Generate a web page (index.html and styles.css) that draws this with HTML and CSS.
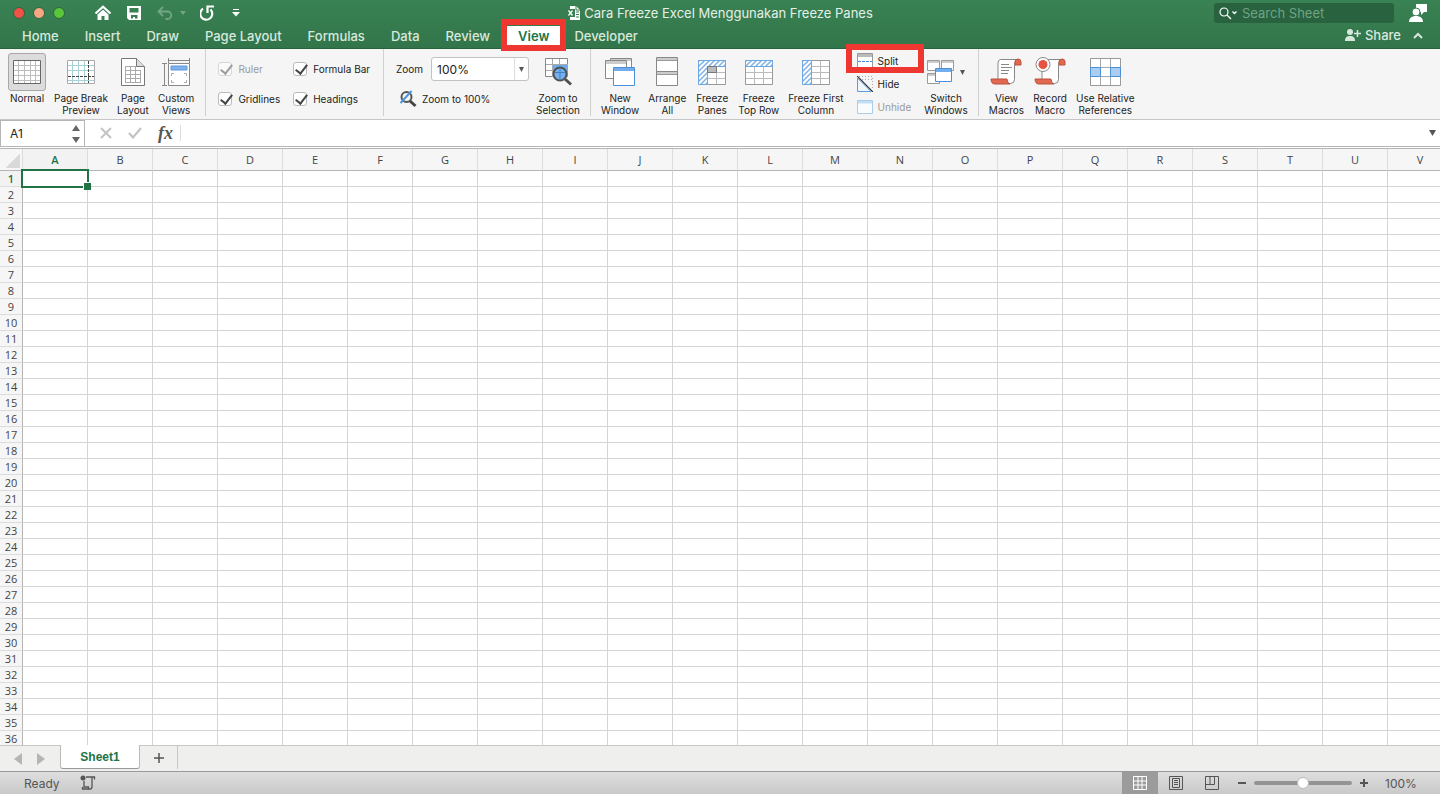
FILE: index.html
```html
<!DOCTYPE html>
<html lang="en">

<head>
    <meta charset="UTF-8">
    <meta name="viewport" content="width=device-width, initial-scale=1.0">
    <title>Cara Freeze Excel Menggunakan Freeze Panes</title>
    <link rel="stylesheet" href="styles.css">
</head>

<body>
    <header class="app-header">
        <div class="title-bar">
            <div class="title-left">
                <div class="window-buttons">
                    <button class="window-button close" aria-label="Close"></button>
                    <button class="window-button minimize" aria-label="Minimize"></button>
                    <button class="window-button maximize" aria-label="Maximize"></button>
                </div>
                <div class="quick-access">
                    <button class="quick-button" aria-label="Home">
                        <svg width="18" height="16" viewBox="0 0 18 16"><path d="M1.500 8.500L9 1.800l7.500 6.700" fill="none" stroke="#fff" stroke-width="2.200"/><path d="M3.500 9.500L9 4.800l5.500 4.700V15H10.500v-4h-3v4h-4z" fill="#fff"/></svg>
                    </button>
                    <button class="quick-button" aria-label="Save">
                        <svg width="16" height="16" viewBox="0 0 16 16"><path fill="#fff" fill-rule="evenodd" d="M1 1h14v14H3l-2-2zM3.500 3v4.500h9V3zM5 10v3.500h2V12h2v1.500h2.500V10z"/></svg>
                    </button>
                    <button class="quick-button faded" aria-label="Undo">
                        <svg width="18" height="16" viewBox="0 0 18 16"><path d="M7 2L2.500 6.500 7 11M3 6.500h8.500a3.500 3.500 0 0 1 0 7.500H9.500" fill="none" stroke="#fff" stroke-width="1.800"/></svg>
                        <svg class="undo-arrow" width="6" height="4" viewBox="0 0 6 4"><path d="M0 0h6L3 4z" fill="#fff"/></svg>
                    </button>
                    <button class="quick-button" aria-label="Redo">
                        <svg width="18" height="18" viewBox="0 0 18 18"><path d="M3 4.700A6 6 0 1 0 10.500 5.500M7.500 9V2.500H14" fill="none" stroke="#fff" stroke-width="2.200"/></svg>
                    </button>
                    <button class="quick-button" aria-label="Customize toolbar">
                        <svg width="8" height="8" viewBox="0 0 8 8"><path d="M1 .5h6" stroke="#fff"/><path d="M0 3h8L4 7.500z" fill="#fff"/></svg>
                    </button>
                </div>
            </div>
            <div class="document-title">
                <svg width="14" height="16" viewBox="0 0 14 16"><path d="M3 1h6l4 4v10H3z" fill="#fff"/><path d="M9 1v4h4" fill="none" stroke="#387f51"/><path d="M9 7h3M9 9.500h3M9 12h3" stroke="#387f51"/><path d="M0 4h8v8H0z" fill="#387f51"/><path d="M1.500 5.500l4 5M5.500 5.500l-4 5" stroke="#fff" stroke-width="1.300"/></svg>
                <span>Cara Freeze Excel Menggunakan Freeze Panes</span>
            </div>
            <div class="title-right">
                <label class="search-box">
                    <svg width="20" height="14" viewBox="0 0 20 14"><circle cx="6" cy="6" r="4" fill="none" stroke="#fff" stroke-width="1.200"/><path d="M9 9l4 4M14.500 5.500l2 2 2-2" fill="none" stroke="#fff" stroke-width="1.300"/></svg>
                    <input type="search" placeholder="Search Sheet" aria-label="Search Sheet">
                </label>
                <button class="quick-button" aria-label="Account">
                    <svg width="20" height="19" viewBox="0 0 20 19"><path d="M8 0h11v8h-3l-3 3V8H8z" fill="#fff"/><circle cx="8" cy="8" r="4" fill="#fff" stroke="#387f51"/><path d="M1 18c0-4 3-6 7-6s7 2 7 6z" fill="#fff"/></svg>
                </button>
            </div>
        </div>
        <div class="tab-bar">
            <nav class="tabs">
                <a class="tab" href="#">Home</a>
                <a class="tab" href="#">Insert</a>
                <a class="tab" href="#">Draw</a>
                <a class="tab" href="#">Page Layout</a>
                <a class="tab" href="#">Formulas</a>
                <a class="tab" href="#">Data</a>
                <a class="tab" href="#">Review</a>
                <a class="tab active" href="#">View</a>
                <a class="tab" href="#">Developer</a>
            </nav>
            <div class="share-area">
                <button class="share-button">
                    <svg width="18" height="14" viewBox="0 0 18 14"><circle cx="6" cy="4" r="3" fill="#d9e8de"/><path d="M1 13c0-4 2-5 5-5s5 1 5 5z" fill="#d9e8de"/><path d="M10 5.500h7M13.500 2v7" stroke="#d9e8de" stroke-width="1.500"/></svg>
                    Share
                </button>
                <button class="share-button" aria-label="Collapse ribbon">
                    <svg width="10" height="7" viewBox="0 0 10 7"><path d="M1 6l4-4 4 4" fill="none" stroke="#d9e8de" stroke-width="2"/></svg>
                </button>
            </div>
        </div>
    </header>

    <section class="ribbon">
        <svg class="defs" width="0" height="0" aria-hidden="true">
            <defs>
                <pattern id="hatch" width="5" height="5" patternUnits="userSpaceOnUse">
                    <path d="M0 0h5v5H0z" fill="#fff"/><path d="M-1 6L6-1M-1 1l2-2M4 6l2-2" stroke="#7fb2e5" stroke-width="1.500"/>
                </pattern>
            </defs>
        </svg>

        <!-- Workbook views -->
        <div class="ribbon-group views">
            <button class="big-button selected">
                <span class="icon"><svg width="30" height="28" viewBox="0 0 30 28"><path d="M1 2h28v24H1z" fill="#fff"/><path d="M1 7.500h28M1 12.500h28M1 17.500h28M1 22.500h28M6.500 2v24M12.500 2v24M18.500 2v24M23.500 2v24" stroke="#bdbdbd"/><path d="M1.500 2.500h27v23h-27z" fill="none" stroke="#666"/></svg></span>
                <span>Normal</span>
            </button>
            <button class="big-button">
                <span class="icon"><svg width="30" height="28" viewBox="0 0 30 28"><path d="M1.500 2.500h27v23h-27z" fill="#fff" stroke="#aaa"/><path d="M2 7.500h26M2 12.500h26M2 22.500h26M6.500 3v22M12.500 3v22M18.500 3v22" stroke="#a9cfd6"/><path d="M2 18.500h26M22.500 3v22" stroke="#444" stroke-dasharray="3 1"/></svg></span>
                <span>Page Break<br>Preview</span>
            </button>
            <button class="big-button">
                <span class="icon"><svg width="26" height="30" viewBox="0 0 26 30"><path d="M1.500 1.500h15l8 8v19h-23z" fill="#fff" stroke="#777"/><path d="M5 9.500h12M5 13.500h16M5 17.500h16M5 21.500h16M5 25.500h16M5.500 9v17M10.500 9v17M15.500 9v17M20.500 13v13" stroke="#aaa"/><path d="M16.500 1.500v8h8" fill="#ddd" stroke="#777"/></svg></span>
                <span>Page<br>Layout</span>
            </button>
            <button class="big-button">
                <span class="icon"><svg width="30" height="30" viewBox="0 0 30 30"><path d="M7 3.500h21M7.500 1v5M28.500 1v5M3.500 7v21M1 6.500h5M1 28.500h5" stroke="#888"/><path d="M7.500 6.500h21v22h-21z" fill="#fff" stroke="#888"/><path d="M10 9h16v4H10z" fill="#7fb2ea" stroke="#5c98da"/><path d="M10.500 19v-2.500H13M23 16.500h2.500V19M10.500 23v2.500H13M23 25.500h2.500V23" fill="none" stroke="#aaa"/></svg></span>
                <span>Custom<br>Views</span>
            </button>
        </div>

        <!-- Show / hide -->
        <div class="ribbon-group checks">
            <label class="check disabled"><input type="checkbox" checked disabled>Ruler</label>
            <label class="check"><input type="checkbox" checked>Formula Bar</label>
            <label class="check"><input type="checkbox" checked>Gridlines</label>
            <label class="check"><input type="checkbox" checked>Headings</label>
        </div>

        <!-- Zoom -->
        <div class="ribbon-group zoom-group">
            <div class="zoom-tools">
                <div class="zoom-row">
                    <label for="zoom-level">Zoom</label>
                    <div class="zoom-select">
                        <select id="zoom-level">
                            <option>100%</option>
                            <option>75%</option>
                            <option>50%</option>
                        </select>
                        <svg width="5" height="5" viewBox="0 0 5 5"><path d="M0 0h5L2.500 5z" fill="#555"/></svg>
                    </div>
                </div>
                <button class="small-button zoom-full">
                    <svg width="18" height="18" viewBox="0 0 18 18"><circle cx="7.500" cy="7" r="5" fill="#f5f5f5" stroke="#555" stroke-width="2"/><path d="M11 11l5.500 5" stroke="#444" stroke-width="3"/><path d="M1.500 13L12.500 1" stroke="#4b94dc" stroke-width="2"/></svg>
                    Zoom to 100%
                </button>
            </div>
            <button class="big-button">
                <span class="icon"><svg width="28" height="30" viewBox="0 0 28 30"><path d="M1.500 1.500h22v18h-22z" fill="#fff" stroke="#888"/><path d="M8 7h16v12H8z" fill="#6faaea"/><path d="M2 7.500h22M2 13.500h6M8.500 2v18M15.500 2v5" stroke="#aaa"/><circle cx="16" cy="17" r="6.500" fill="#72b0f0" stroke="#505050" stroke-width="2"/><path d="M16 12v10M11 15.500h10" stroke="#4580bd"/><path d="M21 22l6 5.500" stroke="#505050" stroke-width="3"/></svg></span>
                <span>Zoom to<br>Selection</span>
            </button>
        </div>

        <!-- Window -->
        <div class="ribbon-group">
            <button class="big-button">
                <span class="icon"><svg width="32" height="30" viewBox="0 0 32 30"><path d="M6.500 1.500h21v18h-21z" fill="#fff" stroke="#888"/><path d="M7 2h20v2H7z" fill="#ccc"/><path d="M1.500 3.500h21v18h-21z" fill="#fff" stroke="#888"/><path d="M2 4h20v3H2z" fill="#ccc"/><path d="M9.500 10.500h21v18h-21z" fill="#fff" stroke="#4a90d9"/><path d="M10 11h20v3H10z" fill="#75adea"/></svg></span>
                <span>New<br>Window</span>
            </button>
            <button class="big-button">
                <span class="icon"><svg width="24" height="32" viewBox="0 0 24 32"><path d="M1.500 1.500h21v14h-21zM1.500 15.500h21v14h-21z" fill="#fff" stroke="#888"/><path d="M2 2h20v3H2zM2 16h20v3H2z" fill="#ccc"/><path d="M2 4.500h20M2 18.500h20" stroke="#999"/></svg></span>
                <span>Arrange<br>All</span>
            </button>
            <button class="big-button">
                <span class="icon"><svg width="30" height="28" viewBox="0 0 30 28"><path d="M1.500 2.500h27v24h-27z" fill="#fff" stroke="#999"/><path d="M10 14.500h18M10 20.500h18M10.500 9v17M19.500 9v17" stroke="#bbb"/><path d="M1.500 2.500h27v6h-18v18h-9z" fill="url(#hatch)" stroke="#6ca8e6"/><path d="M10.500 8.500h9v6h-9z" fill="#bbb" stroke="#777"/></svg></span>
                <span>Freeze<br>Panes</span>
            </button>
            <button class="big-button">
                <span class="icon"><svg width="30" height="28" viewBox="0 0 30 28"><path d="M1.500 2.500h27v24h-27z" fill="#fff" stroke="#999"/><path d="M2 14.500h26M2 20.500h26M10.500 9v17M19.500 9v17" stroke="#bbb"/><path d="M1.500 2.500h27v6h-27z" fill="url(#hatch)" stroke="#6ca8e6"/></svg></span>
                <span>Freeze<br>Top Row</span>
            </button>
            <button class="big-button">
                <span class="icon"><svg width="30" height="28" viewBox="0 0 30 28"><path d="M1.500 2.500h27v24h-27z" fill="#fff" stroke="#999"/><path d="M10 8.500h18M10 14.500h18M10 20.500h18M19.500 3v23" stroke="#bbb"/><path d="M1.500 2.500h9v24h-9z" fill="url(#hatch)" stroke="#6ca8e6"/></svg></span>
                <span>Freeze First<br>Column</span>
            </button>
            <div class="window-tools">
                <button class="small-button highlighted">
                    <svg width="16" height="15" viewBox="0 0 16 15"><path d="M.5.500h15v14H.5z" fill="#fff" stroke="#999"/><path d="M1 1h14v3H1z" fill="#bbb"/><path d="M1 8.500h14" stroke="#4a90d9" stroke-dasharray="3 1"/></svg>
                    Split
                </button>
                <button class="small-button">
                    <svg width="16" height="16" viewBox="0 0 16 16"><path d="M.5 2v13.500H14z" fill="#eef6ff" stroke="#5b9de0"/><path d="M2 .5h13.500V14M2 3.500h13" fill="none" stroke="#aaa" stroke-dasharray="1 2"/><path d="M0 0l16 16" stroke="#333" stroke-width="1.200"/></svg>
                    Hide
                </button>
                <button class="small-button" disabled>
                    <svg width="16" height="14" viewBox="0 0 16 14"><path d="M.5.500h15v13H.5z" fill="#f8fcff" stroke="#a8cdea"/><path d="M1 1h14v2.500H1z" fill="#c5dff2"/></svg>
                    Unhide
                </button>
            </div>
            <button class="big-button">
                <span class="icon"><svg width="28" height="28" viewBox="0 0 28 28"><path d="M.5 2.500h12v10H.5zM14.500 2.500h12v10h-12zM.5 15.500h12v10H.5z" fill="#fff" stroke="#999"/><path d="M1 3h11v2H1zM15 3h11v2H15zM1 16h11v2H1z" fill="#ccc"/><path d="M8.500 10.500h16v13h-16z" fill="#fff" stroke="#4a90d9"/><path d="M9 11h15v3H9z" fill="#75adea"/></svg><svg width="5" height="5" viewBox="0 0 5 5"><path d="M0 0h5L2.500 5z" fill="#555"/></svg></span>
                <span>Switch<br>Windows</span>
            </button>
        </div>

        <!-- Macros -->
        <div class="ribbon-group">
            <button class="big-button">
                <span class="icon"><svg width="32" height="30" viewBox="0 0 32 30"><path d="M10.500 2.500h17q-3 1-3 5v15q0 4-4 4H6q2-2 2-6V6q0-3 2.500-3.500z" fill="#fff" stroke="#888"/><path d="M25 8V5q0-3 3-3t3 3v3z" fill="#e2694f" stroke="#b65340"/><path d="M1 22h16q0 4 3 5H5q-4 0-4-5z" fill="#e2694f" stroke="#b65340"/><path d="M11 7.500h8M11 10.500h11M11 13.500h8M11 16.500h7" stroke="#888"/></svg></span>
                <span>View<br>Macros</span>
            </button>
            <button class="big-button">
                <span class="icon"><svg width="32" height="30" viewBox="0 0 32 30"><path d="M10.500 2.500h17q-3 1-3 5v15q0 4-4 4H6q2-2 2-6V6q0-3 2.500-3.500z" fill="#fff" stroke="#888"/><path d="M25 8V5q0-3 3-3t3 3v3z" fill="#e2694f" stroke="#b65340"/><path d="M1 22h16q0 4 3 5H5q-4 0-4-5z" fill="#e2694f" stroke="#b65340"/><circle cx="9" cy="7.500" r="7" fill="#fff" stroke="#888"/><circle cx="9" cy="7.500" r="4.500" fill="#e65340"/></svg></span>
                <span>Record<br>Macro</span>
            </button>
            <button class="big-button">
                <span class="icon"><svg width="32" height="28" viewBox="0 0 32 28"><path d="M1.500.500h30v27h-30z" fill="#fff" stroke="#999"/><path d="M2 9.500h29M2 18.500h29M11.500 1v26M21.500 1v26" stroke="#aaa"/><path d="M1.500 9.500h10v9h-10zM21.500 9.500h10v9h-10z" fill="#abcdf1" stroke="#4a90d9"/></svg></span>
                <span>Use Relative<br>References</span>
            </button>
        </div>
    </section>

    <section class="formula-bar">
        <div class="name-box">
            <input type="text" value="A1" aria-label="Name box">
            <button class="name-stepper" aria-label="Choose name">
                <svg width="8" height="18" viewBox="0 0 8 18"><path d="M0 6l4-6 4 6zM0 12h8l-4 6z" fill="#666"/></svg>
            </button>
        </div>
        <div class="formula-actions">
            <button class="formula-button" aria-label="Cancel">
                <svg width="12" height="12" viewBox="0 0 12 12"><path d="M1 1l10 10M11 1L1 11" stroke="#c4c4c4" stroke-width="2"/></svg>
            </button>
            <button class="formula-button" aria-label="Enter">
                <svg width="14" height="12" viewBox="0 0 14 12"><path d="M1 6l4 4.500L13 1" fill="none" stroke="#c4c4c4" stroke-width="2.200"/></svg>
            </button>
            <button class="formula-button fx">fx</button>
        </div>
        <input class="formula-input" type="text" aria-label="Formula">
        <button class="formula-button expand" aria-label="Expand formula bar">
            <svg width="7" height="6" viewBox="0 0 7 6"><path d="M0 0h7L3.500 6z" fill="#555"/></svg>
        </button>
    </section>

    <main class="sheet">
        <table class="grid" id="grid"></table>
    </main>

    <footer>
        <div class="sheet-bar">
            <div class="sheet-nav">
                <button aria-label="Previous sheet"><svg width="8" height="12" viewBox="0 0 8 12"><path d="M8 0v12L0 6z" fill="#b5b5b5"/></svg></button>
                <button aria-label="Next sheet"><svg width="8" height="12" viewBox="0 0 8 12"><path d="M0 0v12l8-6z" fill="#b5b5b5"/></svg></button>
            </div>
            <a class="sheet-tab" href="#">Sheet1</a>
            <button class="add-sheet" aria-label="Add sheet"><svg width="12" height="12" viewBox="0 0 12 12"><path d="M6 1v10M1 6h10" stroke="#555" stroke-width="1.500"/></svg></button>
        </div>
        <div class="status-bar">
            <span class="status-text">Ready</span>
            <button class="status-macro" aria-label="Record macro">
                <svg width="16" height="16" viewBox="0 0 16 16"><circle cx="3" cy="3" r="2.500" fill="#555"/><path d="M6 2h8.500v2.500M12 2.500v9q0 2.500-2 2.500H2.500v-2M4 6v6h4.500v2" fill="none" stroke="#555" stroke-width="1.300"/></svg>
            </button>
            <div class="view-buttons">
                <button class="view-button on" aria-label="Normal view"><svg width="14" height="14" viewBox="0 0 14 14"><path d="M.5.500h13v13H.5zM5 1v12M9 1v12M1 5h12M1 9h12" fill="none" stroke="#fff" stroke-width="1"/></svg></button>
                <button class="view-button" aria-label="Page layout view"><svg width="14" height="14" viewBox="0 0 14 14"><path d="M.5.500h13v13H.5zM3.500 2.500h7v9h-7zM5 4.500h4M5 6.500h4M5 8.500h4" fill="none" stroke="#555"/></svg></button>
                <button class="view-button" aria-label="Page break view"><svg width="14" height="14" viewBox="0 0 14 14"><path d="M.5.500h13v13H.5zM.5 8.500h9V1M5 1v7" fill="none" stroke="#555"/></svg></button>
            </div>
            <div class="zoom-control">
                <button aria-label="Zoom out"><svg width="8" height="8" viewBox="0 0 8 8"><path d="M0 4h8" stroke="#555" stroke-width="2"/></svg></button>
                <input class="zoom-slider" type="range" min="0" max="200" value="100" aria-label="Zoom">
                <button aria-label="Zoom in"><svg width="8" height="8" viewBox="0 0 8 8"><path d="M0 4h8M4 0v8" stroke="#555" stroke-width="2"/></svg></button>
            </div>
            <span class="zoom-value">100%</span>
        </div>
    </footer>

    <script src="script.js"></script>
</body>

</html>
```
FILE: styles.css
```css
* {
    box-sizing: border-box;
}

body {
    margin: 0;
    display: flex;
    flex-direction: column;
    height: 100vh;
    overflow: hidden;
    font-family: Inter, "Liberation Sans", sans-serif;
    font-size: 11px;
    color: #222;
    background-color: #fff;
}

button,
input,
select {
    font: inherit;
    color: inherit;
    margin: 0;
    padding: 0;
    border: none;
    background: none;
}

a {
    color: inherit;
    text-decoration: none;
}

svg {
    display: block;
    flex: none;
}

/* Green header */
.app-header {
    background: linear-gradient(#398253, #32754a);
    border-bottom: 1px solid #27633c;
    flex: none;
}

.title-bar {
    display: grid;
    grid-template-columns: 1fr auto 1fr;
    align-items: center;
    height: 26px;
}

.title-left,
.window-buttons,
.quick-access,
.title-right,
.document-title,
.quick-button {
    display: flex;
    align-items: center;
}

.window-buttons {
    gap: 8px;
    padding-left: 13px;
}

.window-button {
    width: 12px;
    height: 12px;
    border: 1px solid #2f6340;
    border-radius: 50%;
}

.close {
    background-color: #f05248;
}

.minimize {
    background-color: #f7a883;
}

.maximize {
    background-color: #5ac63c;
}

.quick-access {
    gap: 14px;
    padding-left: 29px;
}

.quick-button {
    gap: 6px;
}

.faded {
    opacity: 0.3;
}

.document-title {
    gap: 3px;
    font-size: 13px;
    color: #e4efe8;
}

.title-right {
    justify-content: flex-end;
    gap: 14px;
    padding-right: 12px;
}

.search-box {
    display: flex;
    align-items: center;
    gap: 4px;
    width: 180px;
    height: 20px;
    padding-left: 4px;
    border-radius: 3px;
    background-color: #29623f;
}

.search-box input {
    flex: 1;
    min-width: 0;
    font-size: 13px;
    outline: none;
}

.search-box input::placeholder {
    color: #6fa483;
}

.tab-bar {
    display: flex;
    justify-content: space-between;
    height: 22px;
    padding: 0 17px 0 9px;
}

.tabs {
    display: flex;
    align-items: flex-start;
}

.tab {
    position: relative;
    padding: 0 13px;
    font-size: 13px;
    font-weight: 500;
    line-height: 20px;
    color: #d9e8de;
}

.tab.active {
    margin: 0 1px 0 4px;
    padding: 0 11px;
    background-color: #fff;
    color: #217346;
    font-weight: 600;
}

/* Red frames around the highlighted commands */
.tab.active::after,
.highlighted::after {
    content: "";
    position: absolute;
    z-index: 2;
    border: 6px solid #ee3730;
    pointer-events: none;
}

.tab.active::after {
    inset: -7px -6px -5px;
}

.share-area,
.share-button {
    display: flex;
    align-items: center;
}

.share-area {
    gap: 12px;
    height: 18px;
}

.share-button {
    gap: 3px;
    font-size: 13px;
    font-weight: 500;
    color: #d9e8de;
}

/* Ribbon */
.ribbon {
    display: flex;
    flex: none;
    height: 71px;
    background-color: #f5f5f5;
    border-bottom: 1px solid #c6c6c6;
}

.defs {
    position: absolute;
}

.ribbon-group {
    display: flex;
    gap: 9px;
    padding: 4px 10px 0;
}

.ribbon-group:not(:last-child) {
    border-right: 1px solid #d0d0d0;
    margin-bottom: 3px;
}

.ribbon-group.views {
    gap: 8px;
    padding: 4px 11px 0 8px;
}

.big-button {
    display: flex;
    flex-direction: column;
    align-items: center;
    justify-content: flex-start;
    font-size: 10px;
    line-height: 12px;
    white-space: nowrap;
}

.icon {
    display: flex;
    align-items: center;
    justify-content: center;
    gap: 5px;
    flex: none;
    min-width: 34px;
    height: 38px;
    margin-bottom: 1px;
}

.selected .icon {
    min-width: 38px;
    background-color: #dcdcdc;
    border: 1px solid #a8a8a8;
    border-radius: 3px;
}

.ribbon-group.checks {
    display: grid;
    grid-template-columns: auto auto;
    grid-auto-rows: 30px;
    align-content: start;
    gap: 0 13px;
    padding: 5px 13px 0 12px;
}

.check {
    display: flex;
    align-items: center;
    gap: 6px;
    font-size: 10px;
}

.check.disabled {
    color: #999;
}

.check input {
    appearance: none;
    position: relative;
    width: 14px;
    height: 14px;
    border: 1px solid #bbb;
    border-radius: 3px;
    background-color: #fff;
}

.check input::before {
    content: "";
    position: absolute;
    left: 4px;
    top: -1px;
    width: 5px;
    height: 10px;
    border: solid #444;
    border-width: 0 2px 2px 0;
    transform: rotate(38deg);
}

.check.disabled input {
    opacity: 0.5;
}

.ribbon-group.zoom-group {
    padding-left: 12px;
    gap: 7px;
}

.zoom-tools {
    display: flex;
    flex-direction: column;
    gap: 9px;
    padding-top: 4px;
    font-size: 10px;
}

.zoom-row {
    display: flex;
    align-items: center;
    gap: 8px;
}

.zoom-select {
    position: relative;
}

.zoom-select select {
    display: block;
    appearance: none;
    width: 98px;
    height: 24px;
    padding-left: 5px;
    border: 1px solid #c2c2c2;
    border-radius: 3px;
    background: linear-gradient(#ddd, #ddd) 82px 0 / 1px 100% no-repeat #fff;
    font-size: 12px;
}

.zoom-select svg {
    position: absolute;
    right: 5px;
    top: 10px;
}

.small-button {
    position: relative;
    display: flex;
    align-items: center;
    gap: 5px;
    font-size: 10px;
    white-space: nowrap;
}

.small-button:disabled {
    color: #999;
}

.zoom-full {
    padding-left: 3px;
}

.window-tools {
    display: flex;
    flex-direction: column;
    gap: 8px;
    padding: 0 4px;
}

.highlighted::after {
    inset: -9px -13px -5px -11px;
}

/* Formula bar */
.formula-bar {
    display: flex;
    align-items: center;
    flex: none;
    height: 29px;
    border-bottom: 3px double #b5b5b5;
}

.name-box {
    display: flex;
    align-items: center;
    align-self: stretch;
    width: 85px;
    padding: 0 4px 0 9px;
    border: 1px solid #b5b5b5;
    border-width: 1px 1px 0 1px;
}

.name-box input {
    flex: 1;
    min-width: 0;
    font-size: 12px;
}

.formula-actions {
    display: flex;
    align-items: center;
    gap: 16px;
    height: 16px;
    padding: 0 7px 0 15px;
    border-right: 1px solid #ddd;
}

.formula-button.fx {
    font-family: "Liberation Serif", serif;
    font-size: 18px;
    font-style: italic;
    font-weight: 700;
    line-height: 16px;
    color: #555;
}

.formula-input {
    flex: 1;
    min-width: 0;
    align-self: stretch;
    padding: 0 6px;
}

.expand {
    padding-right: 4px;
}

/* Cells */
.sheet {
    flex: 1;
    min-height: 0;
    overflow: hidden;
    font-family: "Open Sans", "Liberation Sans", sans-serif;
}

.grid {
    width: max-content;
    table-layout: fixed;
    border-collapse: separate;
    border-spacing: 0;
}

.grid th {
    padding: 0;
    background-color: #f6f6f6;
    border-right: 1px solid #dcdcdc;
    border-bottom: 1px solid #dcdcdc;
    font-weight: 400;
    color: #444;
}

.grid thead th {
    width: 65px;
    min-width: 65px;
    height: 22px;
    border-bottom-color: #b5b5b5;
}

.grid thead .corner {
    width: 23px;
    min-width: 23px;
    background: linear-gradient(135deg, #f6f6f6 50%, #d9d9d9 50%) 5px 5px / 15px 14px no-repeat #f6f6f6;
}

.grid tbody th {
    height: 16px;
    border-right-color: #b5b5b5;
    line-height: 15px;
}

.grid .current {
    background-color: #f2f2f2;
    color: #217346;
    font-weight: 600;
}

.grid td {
    padding: 0;
    border-right: 1px solid #d4d4d4;
    border-bottom: 1px solid #d4d4d4;
}

.grid .selected-cell {
    position: relative;
}

.selected-cell::before {
    content: "";
    position: absolute;
    inset: -2px;
    border: 2px solid #217346;
}

.selected-cell::after {
    content: "";
    position: absolute;
    right: -4px;
    bottom: -4px;
    width: 7px;
    height: 7px;
    background-color: #217346;
    border: solid #fff;
    border-width: 1px 0 0 1px;
}

/* Sheet tabs */
footer {
    flex: none;
}

.sheet-bar {
    display: flex;
    height: 26px;
    background-color: #efefee;
    border-top: 1px solid #c8c8c8;
}

.sheet-nav {
    display: flex;
    align-items: center;
    gap: 15px;
    padding: 0 15px 0 14px;
}

.sheet-tab {
    width: 80px;
    height: 24px;
    margin-top: -1px;
    background-color: #fff;
    border: 1px solid #bbb;
    border-top: none;
    border-bottom: 1px solid #999;
    border-radius: 0 0 3px 3px;
    color: #217346;
    font-family: "Liberation Sans", sans-serif;
    font-size: 12px;
    font-weight: 700;
    line-height: 24px;
    text-align: center;
}

.add-sheet {
    width: 38px;
    height: 23px;
    padding: 0 13px;
    border-right: 1px solid #c8c8c8;
}

/* Status bar */
.status-bar {
    display: flex;
    align-items: center;
    height: 23px;
    border-top: 1px solid #999;
    background: linear-gradient(#dedede, #c9c9c9);
    font-size: 12px;
    color: #555;
}

.status-text {
    padding: 0 20px 0 24px;
}

.view-buttons {
    display: flex;
    align-self: stretch;
    margin-left: auto;
}

.view-button {
    display: flex;
    align-items: center;
    justify-content: center;
    width: 36px;
}

.view-button.on {
    background-color: #9b9b9b;
}

.zoom-control {
    display: flex;
    align-items: center;
    gap: 8px;
    padding: 0 17px 0 8px;
}

.zoom-slider {
    appearance: none;
    width: 98px;
    height: 12px;
}

.zoom-slider::-webkit-slider-runnable-track {
    height: 4px;
    border-radius: 2px;
    background-color: #949494;
}

.zoom-slider::-webkit-slider-thumb {
    appearance: none;
    width: 12px;
    height: 12px;
    margin-top: -4px;
    border: 1px solid #bbb;
    border-radius: 50%;
    background-color: #fff;
}

.zoom-value {
    width: 55px;
}
```
FILE: script.js
```js
const ROWS = 36;
const COLUMNS = "ABCDEFGHIJKLMNOPQRSTUV";

const grid = document.getElementById("grid");

// Column headings
let html = '<thead><tr><th class="corner"></th>';
for (const letter of COLUMNS) {
    html += `<th scope="col"${letter === "A" ? ' class="current"' : ""}>${letter}</th>`;
}
html += "</tr></thead><tbody>";

// Row headings and empty cells
for (let row = 1; row <= ROWS; row++) {
    html += `<tr><th scope="row"${row === 1 ? ' class="current"' : ""}>${row}</th>`;
    for (const letter of COLUMNS) {
        html += row === 1 && letter === "A" ? '<td class="selected-cell"></td>' : "<td></td>";
    }
    html += "</tr>";
}

grid.innerHTML = html + "</tbody>";
```
